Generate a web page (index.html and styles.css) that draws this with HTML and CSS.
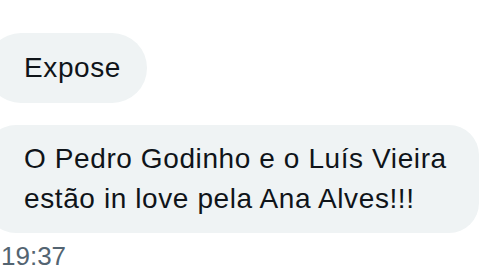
FILE: index.html
```html
<!DOCTYPE html>
<html lang="pt">
<head>
<meta charset="utf-8">
<link rel="stylesheet" href="styles.css">
</head>
<body>
<div class="chat">
  <div class="bubble bubble-short">Expose</div>
  <div class="bubble bubble-long">O Pedro Godinho e o Luís Vieira<br>estão in love pela Ana Alves!!!</div>
  <div class="time">19:37</div>
</div>
</body>
</html>
```
FILE: styles.css
```css
html, body {
  margin: 0;
  padding: 0;
  background: #ffffff;
  width: 480px;
  height: 276px;
  overflow: hidden;
}
.chat {
  display: flex;
  flex-direction: column;
  align-items: flex-start;
  padding-top: 33px;
  font-family: "Liberation Sans", Arial, sans-serif;
  color: #0f1419;
}
.bubble {
  background: #eff3f4;
  font-size: 28px;
  line-height: 40px;
  letter-spacing: 0.6px;
  margin-left: -14px;
  padding-left: 38px;
  white-space: nowrap;
}
.bubble-short {
  border-radius: 35px;
  padding-top: 15px;
  padding-bottom: 15px;
  padding-right: 26px;
}
.bubble-long {
  margin-top: 22px;
  border-radius: 30px;
  padding-top: 14px;
  padding-bottom: 14px;
  padding-right: 32px;
}
.time {
  margin-top: 6px;
  font-size: 26px;
  line-height: 34px;
  color: #536471;
  padding-left: 1px;
}
```
